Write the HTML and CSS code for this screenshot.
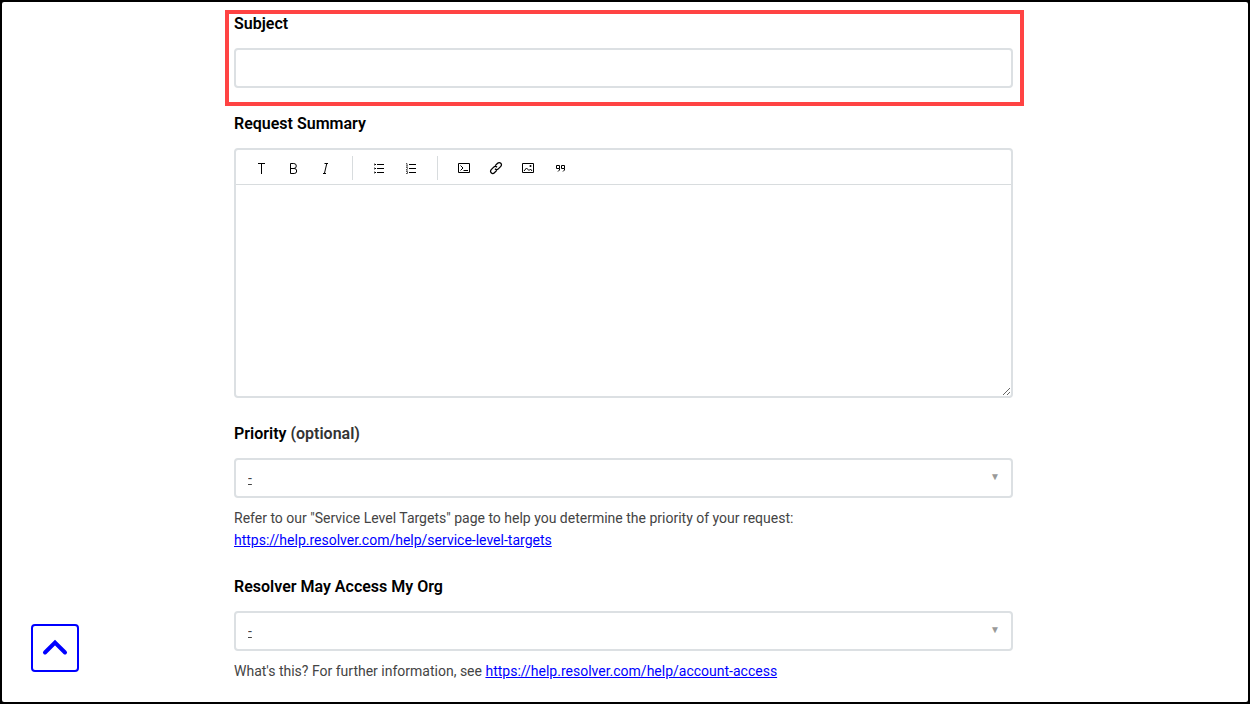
FILE: index.html
```html
<!DOCTYPE html>
<html lang="en">
<head>
    <meta charset="UTF-8">
    <meta name="viewport" content="width=device-width, initial-scale=1.0">
    <title>Submit a request</title>
    <link rel="stylesheet" href="styles.css">
</head>
<body>
    <main class="page">
        <form class="request-form">
            <div class="form-field highlighted">
                <label class="field-label" for="subject">Subject</label>
                <input class="text-input" type="text" id="subject" name="subject">
            </div>

            <div class="form-field">
                <label class="field-label" for="summary">Request Summary</label>
                <div class="editor">
                    <div class="toolbar" role="toolbar" aria-label="Formatting">
                        <button type="button" class="tool" aria-label="Text style">
                            <svg width="16" height="16" viewBox="0 0 16 16"><path d="M4 3.5h7M7.5 3.5V14"/></svg>
                        </button>
                        <button type="button" class="tool" aria-label="Bold">
                            <svg width="16" height="16" viewBox="0 0 16 16"><path d="M4.5 3.5v10h3.7a2.5 2.5 0 0 0 0-5H4.5h3.3a2.5 2.5 0 0 0 0-5z"/></svg>
                        </button>
                        <button type="button" class="tool" aria-label="Italic">
                            <svg width="16" height="16" viewBox="0 0 16 16"><path d="M6.5 3.5H10M5 13.5h3M8.8 3.5l-2.4 10"/></svg>
                        </button>
                        <span class="separator"></span>
                        <button type="button" class="tool" aria-label="Bulleted list">
                            <svg width="16" height="16" viewBox="0 0 16 16"><path d="M6 4.5h7M6 8.5h7M6 12.5h7M3 4.5h2M3 8.5h2M3 12.5h2"/><path class="thin" d="M3.5 3.5v2M3.5 7.5v2M3.5 11.5v2"/></svg>
                        </button>
                        <button type="button" class="tool" aria-label="Numbered list">
                            <svg width="16" height="16" viewBox="0 0 16 16"><path d="M6 4.5h7M6 8.5h7M6 12.5h7"/><path class="thin" d="M3 3.5h1v2.5M3 6h2M3 7.5h1.5v1L3 10h2M3 11.5h1.5v2H3"/></svg>
                        </button>
                        <span class="separator"></span>
                        <button type="button" class="tool" aria-label="Code block">
                            <svg width="16" height="16" viewBox="0 0 16 16"><path d="M2.5 3.5h11v9h-11zM4.5 5.5L7 8l-2.5 2.5M7.5 10.5H12"/></svg>
                        </button>
                        <button type="button" class="tool" aria-label="Link">
                            <svg width="16" height="16" viewBox="0 0 16 16"><path class="link-icon" d="M7.2 5.6l2.4-2.4a2.25 2.25 0 0 1 3.2 3.2l-2.5 2.5a2.25 2.25 0 0 1-3.3-.1M8.8 10.4l-2.4 2.4a2.25 2.25 0 0 1-3.2-3.2l2.5-2.5a2.25 2.25 0 0 1 3.3.1"/></svg>
                        </button>
                        <button type="button" class="tool" aria-label="Image">
                            <svg width="16" height="16" viewBox="0 0 16 16"><path d="M2.5 3.5h11v9h-11zM4 11l2.5-3 2.5 2.5 1.5-1.5L12 11"/><circle class="filled" cx="10.5" cy="6" r="1"/></svg>
                        </button>
                        <button type="button" class="tool" aria-label="Quote">
                            <svg width="16" height="16" viewBox="0 0 16 16"><path d="M7.5 5.5h-3v3h3zM7.5 8.5v1.5L6 11.5M12.5 5.5h-3v3h3zM12.5 8.5v1.5L11 11.5"/></svg>
                        </button>
                    </div>
                    <textarea class="editor-input" id="summary" name="summary"></textarea>
                </div>
            </div>

            <div class="form-field">
                <label class="field-label" for="priority">Priority <span class="optional">(optional)</span></label>
                <div class="select-wrap">
                    <select class="select-input" id="priority" name="priority">
                        <option>-</option>
                    </select>
                </div>
                <p class="hint">Refer to our "Service Level Targets" page to help you determine the priority of your request:<br>
                    <a href="https://help.resolver.com/help/service-level-targets">https://help.resolver.com/help/service-level-targets</a></p>
            </div>

            <div class="form-field">
                <label class="field-label" for="access">Resolver May Access My Org</label>
                <div class="select-wrap">
                    <select class="select-input" id="access" name="access">
                        <option>-</option>
                    </select>
                </div>
                <p class="hint">What's this? For further information, see <a href="https://help.resolver.com/help/account-access">https://help.resolver.com/help/account-access</a></p>
            </div>
        </form>
    </main>

    <a class="back-to-top" href="#" aria-label="Back to top">
        <svg width="28" height="28" viewBox="0 0 28 28"><path d="M4 18.5L14 8.5l10 10"/></svg>
    </a>
</body>
</html>
```
FILE: styles.css
```css
* {
    box-sizing: border-box;
}

body {
    margin: 0;
    font-family: Roboto, "Liberation Sans", sans-serif;
    font-size: 14px;
    line-height: 22px;
    color: #444;
    background: #000;
}

.page {
    min-height: 100vh;
    padding: 10px 3px 8px 0;
    background: #fff;
    border: 2px solid #000;
    border-radius: 4px;
}

.request-form {
    display: flex;
    flex-direction: column;
    gap: 24px;
    max-width: 779px;
    margin: 0 auto;
}

.form-field {
    position: relative;
}

/* red callout frame around the field */
.highlighted::after {
    content: "";
    position: absolute;
    top: -2px;
    right: -11px;
    bottom: -18px;
    left: -9px;
    border: 4px solid #ff4343;
    pointer-events: none;
}

.field-label {
    display: block;
    margin-bottom: 12px;
    font-size: 16px;
    font-weight: 600;
    line-height: 24px;
    color: #000;
}

.optional {
    color: #333;
}

.text-input,
.select-input {
    display: block;
    width: 100%;
    height: 40px;
    padding: 0 12px;
    font: inherit;
    color: #444;
    background: #fff;
    border: 2px solid #dce0e3;
    border-radius: 4px;
}

.editor {
    border: 2px solid #dce0e3;
    border-radius: 4px;
}

.toolbar {
    display: flex;
    align-items: center;
    height: 35px;
    padding: 2px 10px 0;
    border-bottom: 1px solid #d8dcde;
}

.tool {
    display: flex;
    align-items: center;
    justify-content: center;
    width: 32px;
    height: 32px;
    padding: 0;
    background: none;
    border: 0;
    cursor: pointer;
}

.tool svg {
    fill: none;
    stroke: #000;
    stroke-width: 1;
}

.tool .thin {
    stroke: #555;
}

.tool .link-icon {
    stroke-width: 1.3;
}

.tool .filled {
    fill: #000;
    stroke: none;
}

.separator {
    width: 1px;
    height: 24px;
    margin: 0 10px;
    background: #d8dcde;
}

.editor-input {
    display: block;
    width: 100%;
    height: 211px;
    padding: 12px;
    font: inherit;
    color: #444;
    background: transparent;
    border: 0;
    resize: vertical;
}

.select-wrap {
    position: relative;
}

.select-input {
    appearance: none;
    text-decoration: underline;
}

.select-wrap::after {
    content: "▼";
    position: absolute;
    top: 8px;
    right: 13px;
    font-size: 10px;
    color: #999;
    pointer-events: none;
}

.hint {
    margin: 9px 0 0;
}

.hint a {
    color: #00f;
}

.back-to-top {
    position: fixed;
    bottom: 32px;
    left: 31px;
    display: flex;
    align-items: center;
    justify-content: center;
    width: 48px;
    height: 48px;
    background: #fff;
    border: 2px solid #00f;
    border-radius: 4px;
}

.back-to-top svg {
    fill: none;
    stroke: #00f;
    stroke-width: 4;
    stroke-linecap: round;
}
```
